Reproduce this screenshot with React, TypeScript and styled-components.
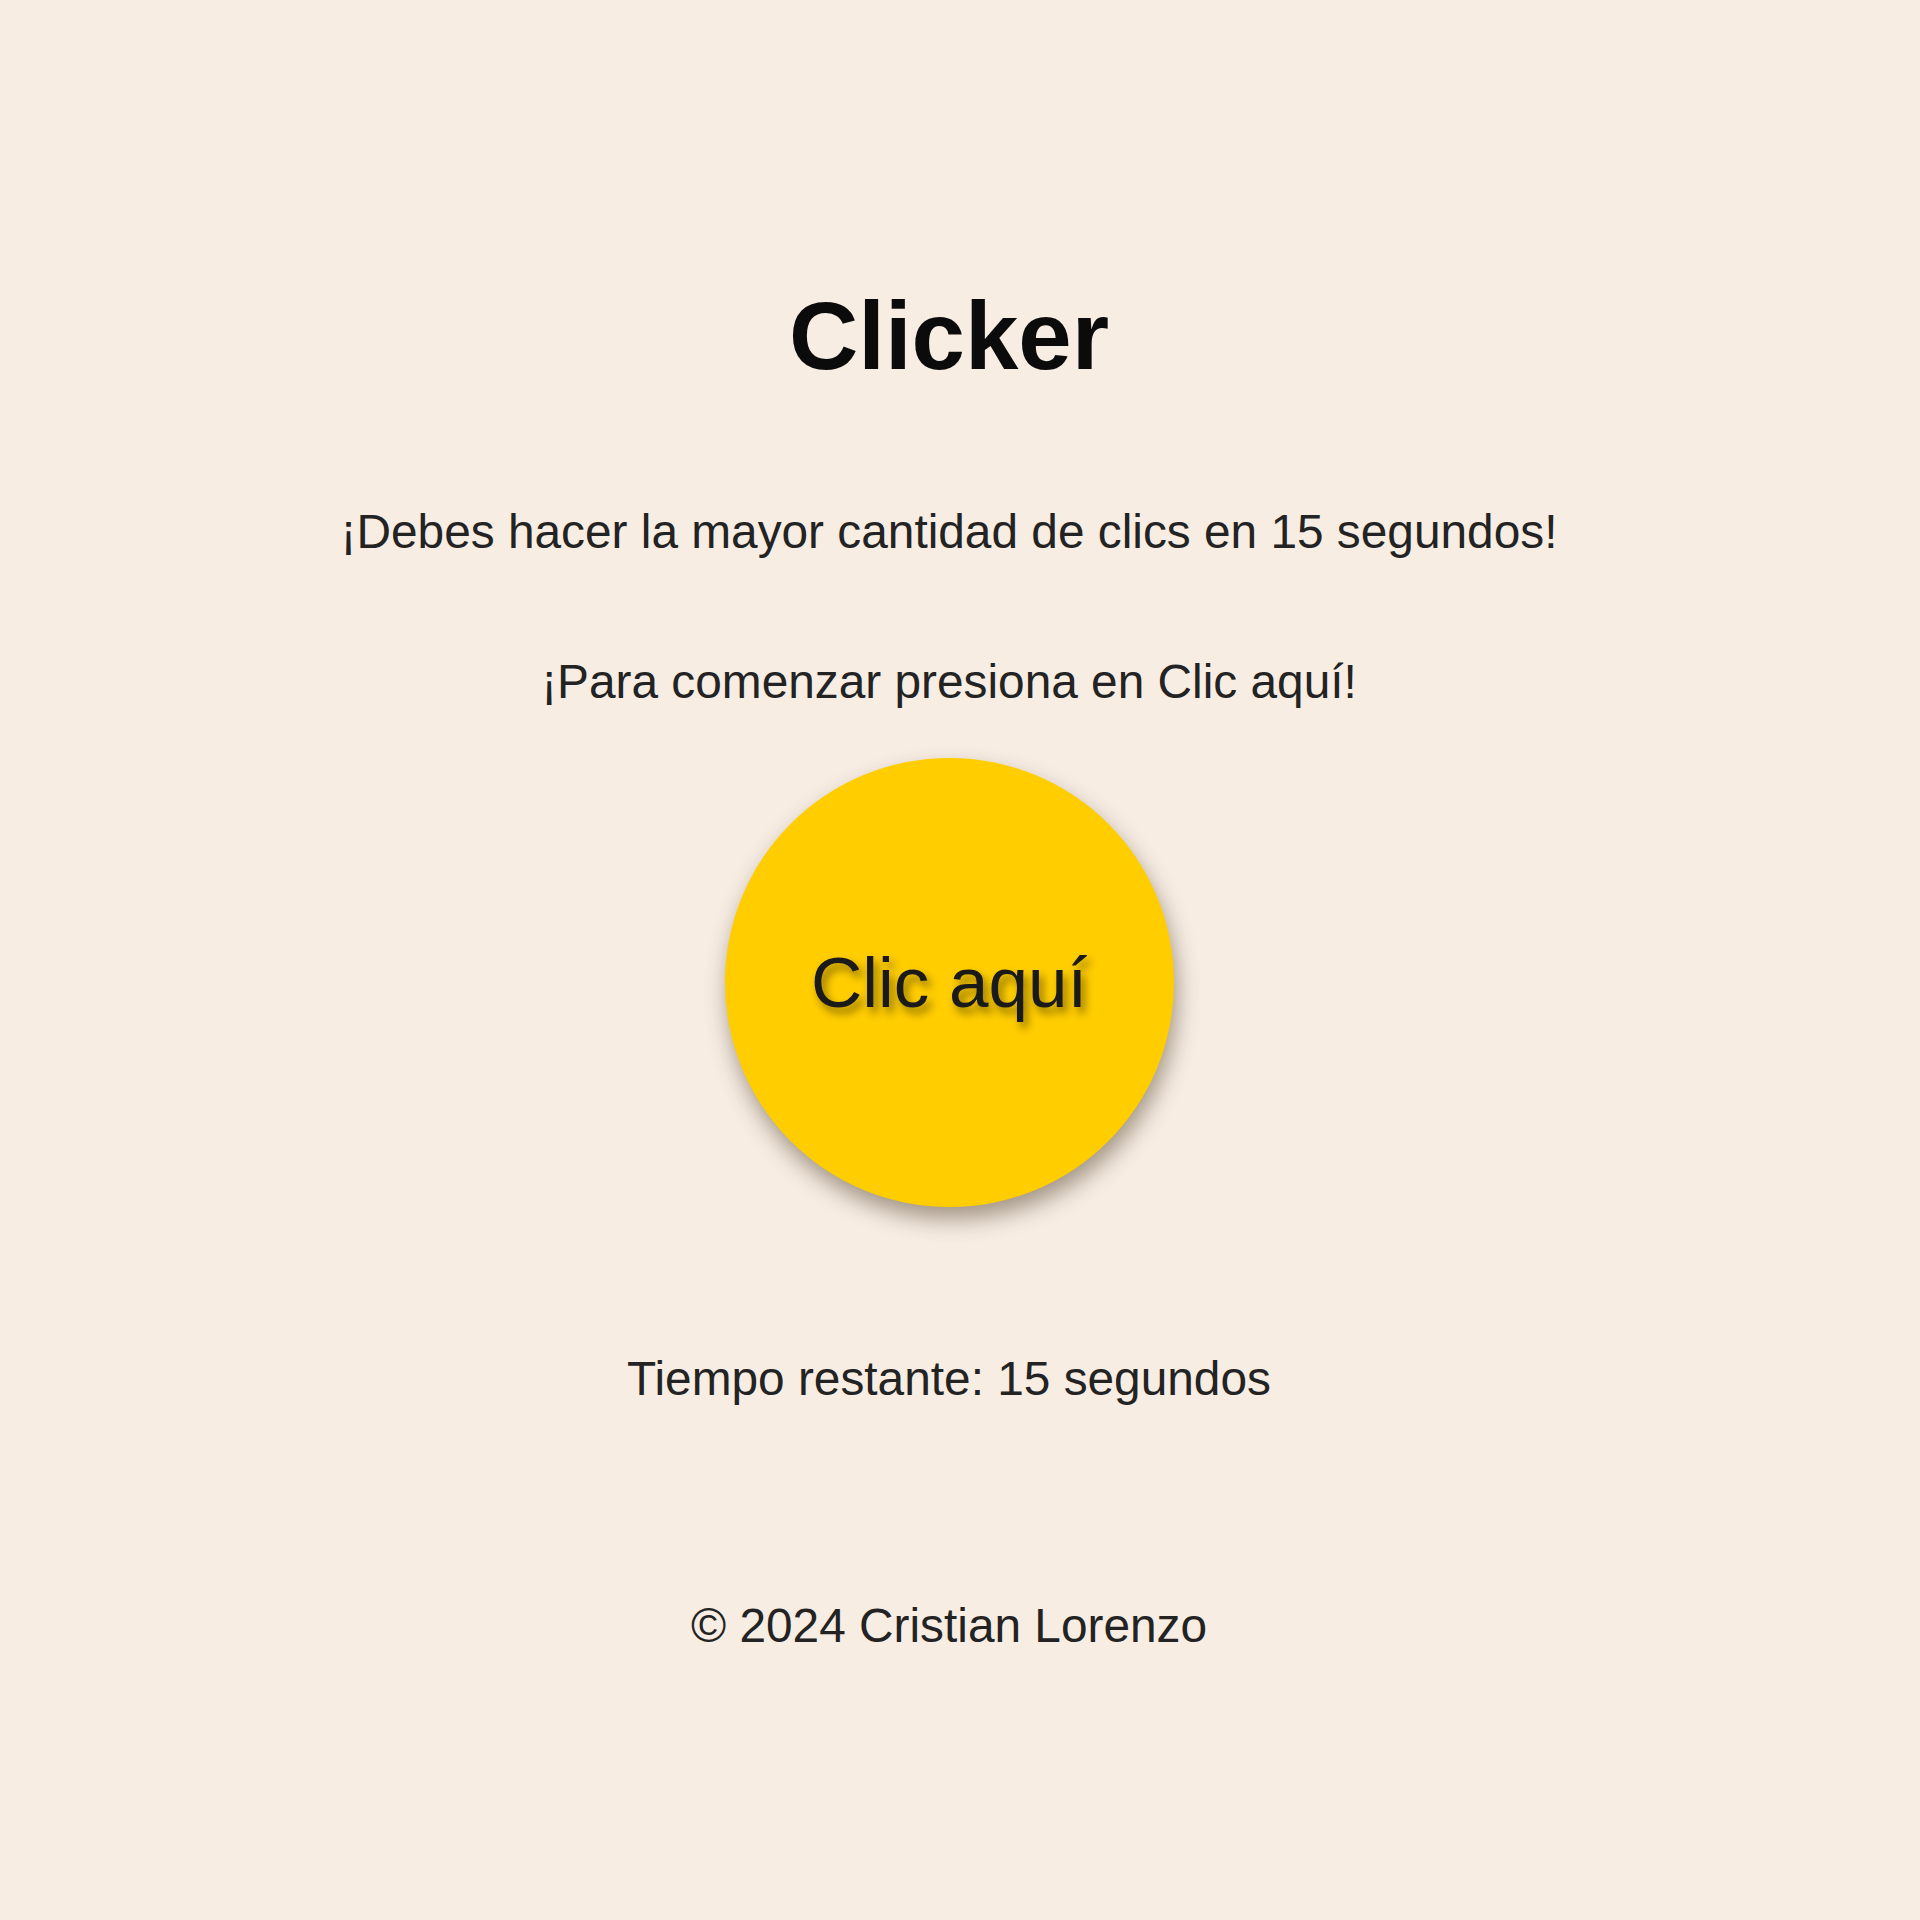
import React from "react";
import styled, { createGlobalStyle } from "styled-components";

const Global = createGlobalStyle`
  html, body {
    margin: 0;
    padding: 0;
    background: #f7ede3;
  }
  body {
    font-family: "Liberation Sans", Arial, sans-serif;
  }
`;

const Page = styled.main`
  min-height: 1920px;
  box-sizing: border-box;
  padding: 281px 22px 0 0;
  display: flex;
  flex-direction: column;
  align-items: center;
  background: #f7ede3;
`;

const Title = styled.h1`
  margin: 0 0 113px;
  font-size: 96px;
  font-weight: 700;
  color: #0b0b0b;
  line-height: normal;
`;

const Text = styled.p<{ $gap: number }>`
  margin: 0 0 ${(p) => p.$gap}px;
  font-size: 47.8px;
  color: #232323;
  line-height: 55px;
  text-align: center;
`;

const ClickButton = styled.button`
  width: 449px;
  height: 449px;
  margin: 0 0 144px;
  padding: 0;
  border: none;
  border-radius: 50%;
  background: #ffcd00;
  box-shadow: 3px 12px 22px rgba(60, 45, 20, 0.45);
  display: flex;
  align-items: center;
  justify-content: center;
  font-family: "Liberation Sans", Arial, sans-serif;
  font-size: 71px;
  color: #1a1a1a;
  text-shadow: 4px 6px 8px rgba(0, 0, 0, 0.45);
  cursor: pointer;
`;

const Footer = styled.footer`
  font-size: 47.8px;
  color: #232323;
  line-height: 55px;
`;

export default function App() {
  return (
    <>
      <Global />
      <Page>
        <Title>Clicker</Title>
        <Text $gap={95}>¡Debes hacer la mayor cantidad de clics en 15 segundos!</Text>
        <Text $gap={49}>¡Para comenzar presiona en Clic aquí!</Text>
        <ClickButton>Clic aquí</ClickButton>
        <Text $gap={192}>Tiempo restante: 15 segundos</Text>
        <Footer>© 2024 Cristian Lorenzo</Footer>
      </Page>
    </>
  );
}
